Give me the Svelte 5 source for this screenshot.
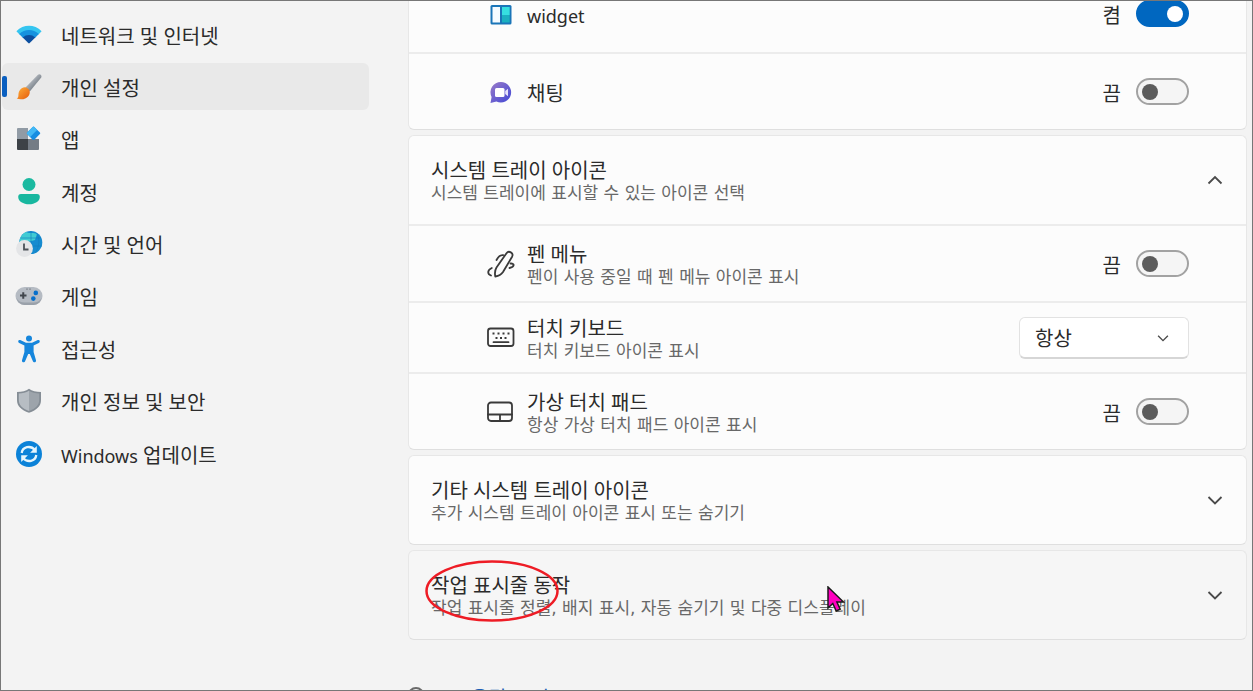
<script lang="ts">
  type NavItem = { id: string; label: string; latin?: string };

  const navItems: NavItem[] = [
    { id: 'network', label: '네트워크 및 인터넷' },
    { id: 'personalization', label: '개인 설정' },
    { id: 'apps', label: '앱' },
    { id: 'accounts', label: '계정' },
    { id: 'time', label: '시간 및 언어' },
    { id: 'gaming', label: '게임' },
    { id: 'accessibility', label: '접근성' },
    { id: 'privacy', label: '개인 정보 및 보안' },
    { id: 'update', latin: 'Windows', label: '업데이트' }
  ];

  let current = $state('personalization');
  let toggles = $state({ widget: true, chat: false, pen: false, touchpad: false });
  let keyboard = $state('always');
  let trayOpen = $state(true);
</script>

{#snippet chevron(up: boolean)}
  <svg class="chevron" viewBox="0 0 16 16" aria-hidden="true">
    <path d={up ? 'M1.5 11.5 8 5l6.5 6.5' : 'M1.5 5 8 11.5 14.5 5'} />
  </svg>
{/snippet}

{#snippet toggle(key: keyof typeof toggles, name: string)}
  <label class="toggle">
    <span>{toggles[key] ? '켬' : '끔'}</span>
    <input type="checkbox" role="switch" aria-label={name} bind:checked={toggles[key]} />
  </label>
{/snippet}

{#snippet navIcon(id: string)}
  <svg class="nav-icon" viewBox="0 0 26 26" aria-hidden="true">
    {#if id === 'network'}
      <path fill="#35c5f0" d="M.4 9.2C7.5 2 18.500 2 25.600 9.200L22.500 12.400 13 11 3.500 12.400Z" />
      <path fill="#1592df" d="M3.200 12C8.700 6.700 17.300 6.700 22.800 12L19 15.900 13 14 7 15.900Z" />
      <path fill="#0b4fa0" d="M6.700 15.500C10.300 12.200 15.700 12.200 19.300 15.500L13.700 21.100Q13 21.800 12.300 21.100Z" />
    {:else if id === 'personalization'}
      <defs>
        <linearGradient id="handle" x1="0" y1="0" x2="1" y2="1">
          <stop offset=".3" stop-color="#b9bec4" />
          <stop offset=".7" stop-color="#737b84" />
        </linearGradient>
        <linearGradient id="bristle" x1="0" y1="0" x2="1" y2="1">
          <stop offset="0" stop-color="#ffb13b" />
          <stop offset="1" stop-color="#e55b0c" />
        </linearGradient>
      </defs>
      <path fill="url(#handle)" d="M9.500 13.500 21.700.9C23.600-.8 26.400 1.200 25.200 3.600L13.800 17.600Z" />
      <path fill="url(#bristle)" d="M9 13.200C12.800 13.800 14.800 17 13.300 20.400 11.300 25.200 5 26.300.7 24.600 3.600 23.100 1.500 20.500 3.300 17 4.500 14.600 6.700 13.200 9 13.200Z" />
    {:else if id === 'apps'}
      <path fill="#919ba5" d="M2 2h10v11H1V3q0-1 1-1Z" />
      <path fill="#3d4247" d="M1 13h11v11H2q-1 0-1-1Z" />
      <path fill="#747c85" d="M12 13h11v10q0 1-1 1H12Z" />
      <path fill="#168de2" d="m16.700.9-5.600 5.600q-.8.8 0 1.600l5.600 5.600q.8.8 1.600 0l5.600-5.600q.8-.8 0-1.600L18.300.9q-.8-.8-1.600 0Z" />
      <path fill="#42b8f5" d="m16.700.9-5.600 5.600q-.8.8 0 1.600l3 3 7-7L18.300.9q-.8-.8-1.600 0Z" />
    {:else if id === 'accounts'}
      <circle cx="13" cy="5.500" r="6.500" fill="#1bb9a0" />
      <path fill="#18b79f" d="M5 15h16q2.800 0 2.800 3c0 4.300-5 7.300-10.800 7.300S2.200 22.300 2.200 18q0-3 2.800-3Z" />
    {:else if id === 'time'}
      <circle cx="14.800" cy="11.500" r="11.500" fill="#168bd0" />
      <path fill="#41cbd3" d="M10 1C14 3 18 1 21 3l-2 6-7 2-3 6-5.200-3C2.500 8 6 2.500 10 1Z" />
      <path fill="none" stroke="#137dba" stroke-width="1" opacity=".6" d="M5 7h20M15 0v23M20.500 2c3.500 6 3 12-1 20M5 15h21" />
      <circle cx="8.500" cy="17.500" r="8.400" fill="#e4e5e7" />
      <path fill="none" stroke="#4c5258" stroke-width="1.800" d="M8 12.500v6h4.500" />
    {:else if id === 'gaming'}
      <path fill="#b5bbc3" d="M8.500 4h9a8.500 8.500 0 0 1 0 18h-9a8.500 8.500 0 0 1 0-18Z" />
      <path fill="#9aa1aa" d="M.5 15a8.500 8.500 0 0 0 8 7h9a8.500 8.500 0 0 0 8-7q-2.500 4.500-8 4.500h-9Q3 19.500.5 15Z" />
      <path fill="none" stroke="#41464d" stroke-width="2" d="M4 12.500h6.500M7.250 9.200v6.600" />
      <path stroke="#60666e" stroke-width="1.200" d="M10.500 6.200h1M13.500 6.200h1" />
      <circle cx="19.800" cy="9.900" r="2.300" fill="#0870cb" />
      <circle cx="17.300" cy="15.600" r="2.300" fill="#0870cb" />
    {:else if id === 'accessibility'}
      <circle cx="13" cy="2.500" r="3" fill="#1686dc" />
      <path fill="#1686dc" d="M4.200 4.100 10 6.800h6l5.800-2.700c2-.8 2.800 1.900 1 2.800L17.600 9.500V16l2.400 8.200c.5 2.200-2.400 2.900-3.100 1L13.800 18h-1.600l-3.100 7.200c-.7 1.900-3.600 1.200-3.100-1L8.400 16V9.500L3.200 6.900c-1.800-.9-1-3.600 1-2.800Z" />
    {:else if id === 'privacy'}
      <path fill="#858d95" d="M13 .8C16 3.400 20 4 25 4v8c0 6-4 10-12 12.800C5 22 1 18 1 12V4c5 0 9-.6 12-3.200Z" />
      <path fill="#b7bdc3" d="M13 2.800C10 4.800 6.500 5.500 2.800 5.500V12c0 5 3.500 8.500 10.200 11Z" />
      <path fill="#9da4ab" d="M13 2.800c3 2 6.500 2.700 10.200 2.700V12c0 5-3.500 8.500-10.200 11Z" />
    {:else}
      <circle cx="13" cy="13" r="13" fill="#0b82d8" />
      <g fill="none" stroke="#e6f5fc" stroke-width="2.300">
        <path d="M5.700 12C6.500 5.800 14.500 3.800 19 9M20.300 14C19.500 20.200 11.500 22.200 7 17" />
      </g>
      <path fill="#e6f5fc" d="M20.800 5v6.700h-6.700ZM5.200 21v-6.700h6.700Z" />
    {/if}
  </svg>
{/snippet}

<div class="window">
  <nav aria-label="설정">
    {#each navItems as item (item.id)}
      <a
        href="#{item.id}"
        class:selected={current === item.id}
        aria-current={current === item.id ? 'page' : undefined}
        onclick={() => (current = item.id)}
      >
        {@render navIcon(item.id)}
        <span class="label">
          {#if item.latin}<span class="latin">{item.latin}</span>{' '}{/if}{item.label}
        </span>
      </a>
    {/each}
  </nav>

  <main>
    <section class="card">
      <div class="row">
        <svg class="row-icon" viewBox="0 0 28 28" aria-hidden="true">
          <rect x="3.500" y="5" width="21" height="19.500" rx="1.500" fill="#1a75b8" />
          <path fill="#f5fbff" d="M5.500 7H13v15.500H5.500Z" />
          <path fill="#36dfe0" d="M15 7h7.700v8H15Z" />
          <path fill="#1bb0c0" d="M15 15h7.700v7.500H15Z" />
        </svg>
        <div class="text"><h3 class="latin">widget</h3></div>
        {@render toggle('widget', 'widget')}
      </div>
      <div class="row">
        <svg class="row-icon" viewBox="0 0 28 28" aria-hidden="true">
          <defs>
            <linearGradient id="bubble" x1="0" y1="0" x2="1" y2="1">
              <stop offset="0" stop-color="#9a7bc8" />
              <stop offset="1" stop-color="#4047d5" />
            </linearGradient>
          </defs>
          <path fill="url(#bubble)" d="M14 4a10.300 10.300 0 1 1-4.600 19.600L3.500 25 4.600 19A10.300 10.300 0 0 1 14 4Z" />
          <rect x="8" y="10" width="9.500" height="9" rx="1.500" fill="#fff" />
          <path fill="#e6e3fa" d="m18.200 13 2.800-2.200v7.400L18.200 16Z" />
        </svg>
        <div class="text"><h3>채팅</h3></div>
        {@render toggle('chat', '채팅')}
      </div>
    </section>

    <section class="card">
      <button class="header" aria-expanded={trayOpen} onclick={() => (trayOpen = !trayOpen)}>
        <span class="text">
          <strong>시스템 트레이 아이콘</strong>
          <small>시스템 트레이에 표시할 수 있는 아이콘 선택</small>
        </span>
        {@render chevron(trayOpen)}
      </button>
      {#if trayOpen}
        <div class="row">
          <svg class="row-icon line" viewBox="0 0 28 28" aria-hidden="true">
            <path d="M9.500 17.500 19.500 3.200c2.200-3.100 7.500-.3 5.600 3.500L16 22c-1.700 2.600-3.800 4-7.700 4.500-.6-3-.5-6.300 1.200-9Z" />
            <path d="M9.500 10c1.800-3.300 4-5.200 6.700-4.800M4.800 18c-4.500 2-4.700 5.800-.8 7.500M23.500 13.500c4.500-.3 4.200 3.300-1 4.500" />
          </svg>
          <div class="text">
            <h3>펜 메뉴</h3>
            <p>펜이 사용 중일 때 펜 메뉴 아이콘 표시</p>
          </div>
          {@render toggle('pen', '펜 메뉴')}
        </div>
        <div class="row short">
          <svg class="row-icon line" viewBox="0 0 28 28" aria-hidden="true">
            <rect x="1" y="4.500" width="25.500" height="17.500" rx="2.500" />
            <path d="M6.500 18.200h15" />
            <path class="keys" d="M5.500 9.500h2M10.500 9.500h2M15.500 9.500h2M20.500 9.500h2M8.500 14h2M13 14h2M17.500 14h2" />
          </svg>
          <div class="text">
            <h3>터치 키보드</h3>
            <p>터치 키보드 아이콘 표시</p>
          </div>
          <div class="dropdown">
            <select aria-label="터치 키보드" bind:value={keyboard}>
              <option value="never">안 함</option>
              <option value="always">항상</option>
            </select>
            {@render chevron(false)}
          </div>
        </div>
        <div class="row">
          <svg class="row-icon line" viewBox="0 0 28 28" aria-hidden="true">
            <rect x="1" y="4.500" width="24" height="18.500" rx="3" />
            <path d="M1 16.500h24M13 16.500V23" />
          </svg>
          <div class="text">
            <h3>가상 터치 패드</h3>
            <p>항상 가상 터치 패드 아이콘 표시</p>
          </div>
          {@render toggle('touchpad', '가상 터치 패드')}
        </div>
      {/if}
    </section>

    <section class="card">
      <button class="header" aria-expanded="false">
        <span class="text">
          <strong>기타 시스템 트레이 아이콘</strong>
          <small>추가 시스템 트레이 아이콘 표시 또는 숨기기</small>
        </span>
        {@render chevron(false)}
      </button>
    </section>

    <section class="card hovered">
      <button class="header" aria-expanded="false">
        <span class="text">
          <strong>작업 표시줄 동작</strong>
          <small>작업 표시줄 정렬, 배지 표시, 자동 숨기기 및 다중 디스플레이</small>
        </span>
        {@render chevron(false)}
      </button>
      <svg class="marker" viewBox="0 0 134 62" aria-hidden="true">
        <ellipse cx="67" cy="31" rx="65.500" ry="29.500" />
      </svg>
      <svg class="cursor" viewBox="0 0 18 27" aria-hidden="true">
        <path d="M1 1v21l4.800-4.500 3.400 7.500 4-1.800-3.300-7.200h6.600Z" />
      </svg>
    </section>

    <a class="help" href="#help">
      <svg viewBox="0 0 20 28" aria-hidden="true">
        <circle cx="8" cy="10.500" r="7.500" />
      </svg>
      <span>도움말 보기</span>
    </a>
  </main>
</div>

<style>
  :global(body) {
    background: #f3f3f3;
  }

  .window {
    position: relative;
    display: flex;
    gap: 39px;
    box-sizing: border-box;
    height: 100vh;
    overflow: hidden;
    padding: 0 6px 0 2px;
    color: #2b2b2b;
    background: #f3f3f3;
    font-family: 'Noto Sans', 'Noto Sans CJK KR', sans-serif;
    font-size: 20px;
    line-height: 22px;
  }

  /* outer frame, drawn over scrolled content */
  .window::after {
    content: '';
    position: absolute;
    inset: 0;
    border: 1px solid #777;
    pointer-events: none;
  }

  nav {
    display: flex;
    flex: 0 0 367px;
    flex-direction: column;
    justify-content: space-between;
    min-height: 466px;
    margin-top: 11px;
    align-self: flex-start;
  }

  nav a {
    position: relative;
    display: flex;
    align-items: center;
    gap: 19px;
    height: 47px;
    padding-left: 14px;
    border-radius: 6px;
    color: inherit;
    text-decoration: none;
  }

  nav a.selected {
    background: #e9e9e9;
  }

  nav a.selected::before {
    content: '';
    position: absolute;
    top: 13px;
    left: 0;
    width: 5px;
    height: 21px;
    border-radius: 2px;
    background: #0a5fc0;
  }

  .nav-icon {
    width: 26px;
    height: 26px;
    overflow: visible;
  }

  .label {
    padding-top: 4px;
  }

  .latin {
    font-size: 18px;
  }

  main {
    display: flex;
    flex: 1;
    flex-direction: column;
    gap: 5px;
    min-width: 0;
    margin-top: -26px;
  }

  .card {
    position: relative;
    flex: none;
    border: 1px solid #e7e7e7;
    border-bottom-color: #dfdfdf;
    border-radius: 6px;
    background: #fcfcfc;
  }

  .card.hovered {
    background: #f6f6f6;
  }

  .row {
    display: flex;
    align-items: center;
    gap: 12px;
    box-sizing: border-box;
    min-height: 77px;
    padding: 0 57px 0 78px;
  }

  .row + .row,
  .header + .row {
    border-top: 2px solid #ececec;
  }

  .row.short {
    min-height: 71px;
  }

  .row-icon {
    flex: none;
    width: 28px;
    height: 28px;
  }

  .row-icon.line {
    fill: none;
    stroke: #3a3a3a;
    stroke-width: 1.8;
    stroke-linecap: round;
    stroke-linejoin: round;
  }

  .row-icon .keys {
    stroke-linecap: butt;
    stroke-width: 2;
  }

  .text {
    display: flex;
    flex: 1;
    flex-direction: column;
    padding-top: 4px;
  }

  h3,
  strong {
    margin: 0;
    font-size: 20px;
    font-weight: 400;
  }

  h3.latin {
    font-size: 18px;
  }

  p,
  small {
    margin: 0;
    color: #686868;
    font-family: 'DejaVu Sans', 'Noto Sans CJK KR', sans-serif;
    font-size: 17px;
  }

  .header {
    display: flex;
    align-items: center;
    width: 100%;
    min-height: 88px;
    border: 0;
    padding: 0 23px 0 22px;
    color: inherit;
    background: none;
    font: inherit;
    text-align: left;
  }

  .chevron {
    width: 16px;
    height: 16px;
    fill: none;
    stroke: #4a4a4a;
    stroke-width: 1.8;
  }

  .toggle {
    display: flex;
    align-items: center;
    gap: 15px;
  }

  .toggle span {
    padding-top: 4px;
  }

  .toggle input {
    display: flex;
    align-items: center;
    box-sizing: border-box;
    width: 53px;
    height: 27px;
    margin: 0;
    border: 2px solid #a2a2a2;
    border-radius: 14px;
    padding: 0 4px;
    appearance: none;
    background: #f5f5f5;
  }

  .toggle input::before {
    content: '';
    width: 16px;
    height: 16px;
    border-radius: 50%;
    background: #5c5c5c;
  }

  .toggle input:checked {
    justify-content: flex-end;
    border-color: #0067c0;
    background: #0067c0;
  }

  .toggle input:checked::before {
    background: #fff;
  }

  .dropdown {
    position: relative;
    width: 170px;
  }

  .dropdown select {
    display: block;
    width: 100%;
    height: 42px;
    border: 1px solid #e2e2e2;
    border-bottom: 2px solid #d6d6d6;
    border-radius: 6px;
    padding: 4px 15px 0;
    color: inherit;
    appearance: none;
    background: #fff;
    font: inherit;
  }

  .dropdown .chevron {
    position: absolute;
    top: 15px;
    right: 20px;
    width: 12px;
    height: 12px;
    pointer-events: none;
  }

  .marker {
    position: absolute;
    top: 9px;
    left: 16px;
    width: 134px;
    height: 62px;
    fill: none;
    stroke: #ee1c25;
    stroke-width: 2.5;
    pointer-events: none;
  }

  .cursor {
    position: absolute;
    top: 35px;
    left: 418px;
    width: 18px;
    height: 27px;
    fill: #ff00c0;
    stroke: #1a1a1a;
    stroke-width: 1.5;
    pointer-events: none;
  }

  .help {
    display: flex;
    align-items: center;
    gap: 24px;
    margin-top: 40px;
    color: #1f5fb5;
    text-decoration: none;
  }

  .help svg {
    width: 20px;
    height: 28px;
    fill: none;
    stroke: #6a6a6a;
    stroke-width: 2;
  }
</style>
